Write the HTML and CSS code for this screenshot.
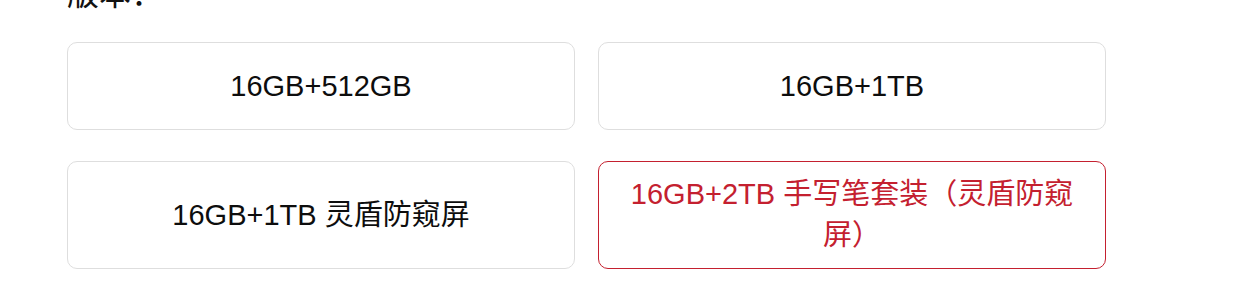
FILE: index.html
```html
<!DOCTYPE html>
<html lang="zh-CN">
<head>
<meta charset="utf-8">
<title>版本</title>
<link rel="stylesheet" href="styles.css">
</head>
<body>
<section class="spec">
  <div class="spec-title">版本：</div>
  <div class="options">
    <div class="option">16GB+512GB</div>
    <div class="option">16GB+1TB</div>
    <div class="option">16GB+1TB 灵盾防窥屏</div>
    <div class="option selected">16GB+2TB 手写笔套装（灵盾防窥屏）</div>
  </div>
</section>
</body>
</html>
```
FILE: styles.css
```css
html, body {
  margin: 0;
  padding: 0;
  background: #fff;
}
body {
  font-family: "Liberation Sans", Arial, "Noto Sans CJK SC", sans-serif;
  color: #111;
  overflow: hidden;
}
.spec {
  padding-left: 67px;
  margin-top: -23px;
}
.spec-title {
  font-size: 32px;
  line-height: 34px;
  height: 34px;
  margin-bottom: 31px;
}
.options {
  display: grid;
  grid-template-columns: 508px 508px;
  column-gap: 23px;
  row-gap: 31px;
}
.option {
  box-sizing: border-box;
  min-height: 88px;
  border: 1px solid #dedede;
  border-radius: 10px;
  padding: 12px 24px;
  display: flex;
  align-items: center;
  justify-content: center;
  text-align: center;
  font-size: 29px;
  line-height: 41px;
  color: #0d0d0d;
}
.option.selected {
  border-color: #c4202f;
  color: #c4202f;
}
```
